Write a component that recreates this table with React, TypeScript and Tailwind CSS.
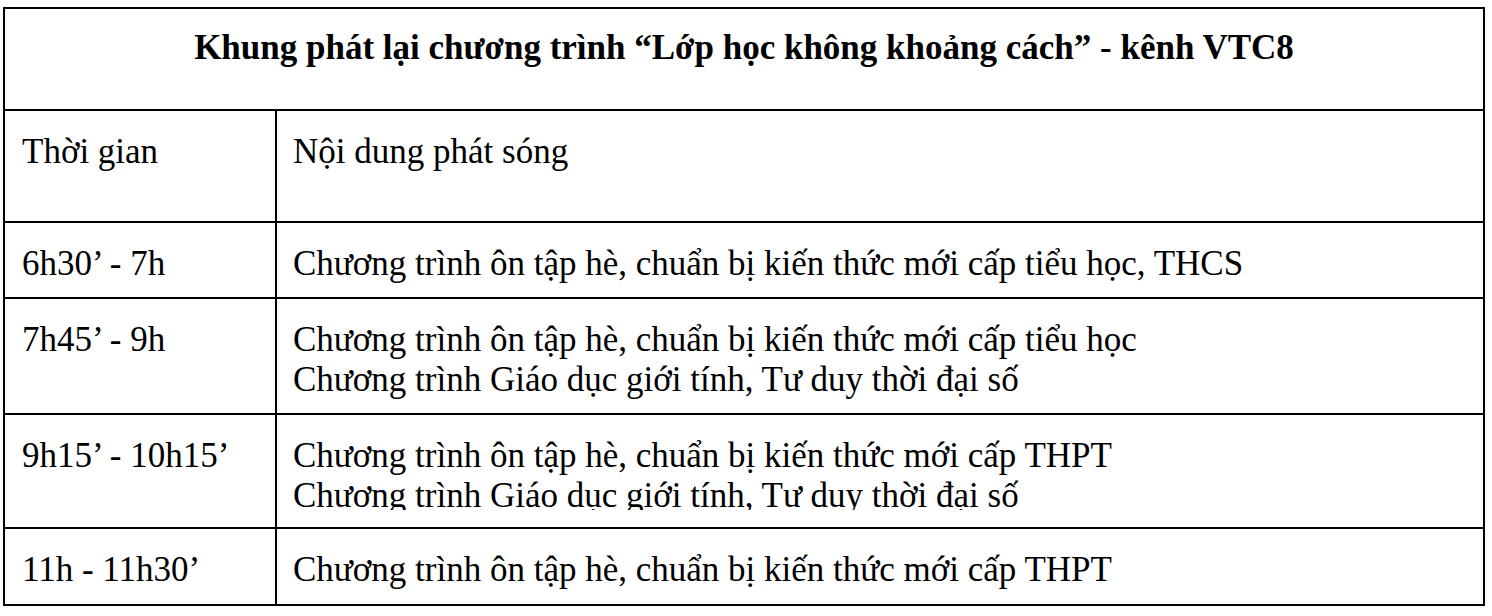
const rows: { time: string; lines: string[]; h: string; clipLast?: boolean }[] = [
  {
    time: "6h30’ - 7h",
    lines: ["Chương trình ôn tập hè, chuẩn bị kiến thức mới cấp tiểu học, THCS"],
    h: "h-[76px]",
  },
  {
    time: "7h45’ - 9h",
    lines: [
      "Chương trình ôn tập hè, chuẩn bị kiến thức mới cấp tiểu học",
      "Chương trình Giáo dục giới tính, Tư duy thời đại số",
    ],
    h: "h-[116px]",
  },
  {
    time: "9h15’ - 10h15’",
    lines: [
      "Chương trình ôn tập hè, chuẩn bị kiến thức mới cấp THPT",
      "Chương trình Giáo dục giới tính, Tư duy thời đại số",
    ],
    h: "h-[114px]",
    clipLast: true,
  },
  {
    time: "11h - 11h30’",
    lines: ["Chương trình ôn tập hè, chuẩn bị kiến thức mới cấp THPT"],
    h: "h-[77px]",
  },
];

export default function App() {
  return (
    <div className="min-h-[616px] w-[1492px] bg-white pt-[7px] pl-[3px] font-['Liberation_Serif','Times_New_Roman',serif] text-[35px] leading-[40px] text-black">
      <div className="w-[1482px] border-2 border-black">
        <div className="h-[100px] pt-[19px] text-center font-bold">
          Khung phát lại chương trình “Lớp học không khoảng cách” - kênh VTC8
        </div>

        <div className="flex h-[112px] border-t-2 border-black">
          <div className="w-[272px] shrink-0 border-r-2 border-black pl-[17px] pt-[21px]">
            Thời gian
          </div>
          <div className="pl-[16px] pt-[21px]">Nội dung phát sóng</div>
        </div>

        {rows.map((row) => (
          <div key={row.time} className={`flex border-t-2 border-black ${row.h}`}>
            <div className="w-[272px] shrink-0 border-r-2 border-black pl-[17px] pt-[21px]">
              {row.time}
            </div>
            <div className="pl-[16px] pt-[21px]">
              {row.lines.map((line, i) =>
                row.clipLast && i === row.lines.length - 1 ? (
                  <div key={i} className="h-[34px] overflow-hidden">
                    {line}
                  </div>
                ) : (
                  <div key={i}>{line}</div>
                )
              )}
            </div>
          </div>
        ))}
      </div>
    </div>
  );
}
